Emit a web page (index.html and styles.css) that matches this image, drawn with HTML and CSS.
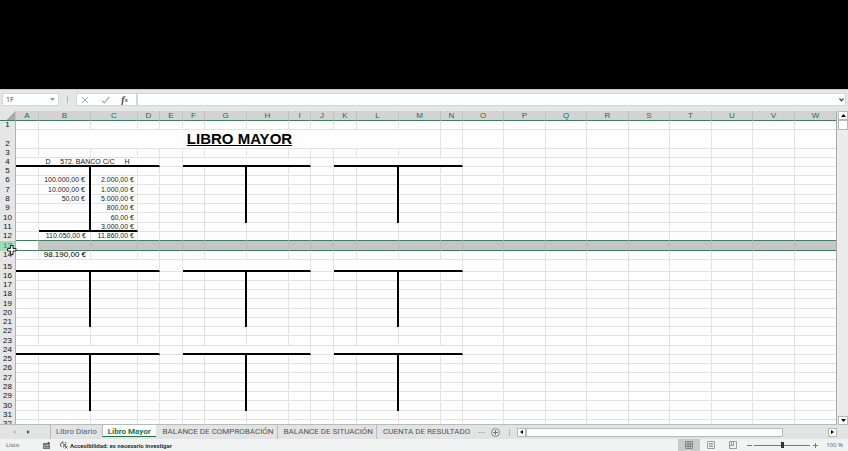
FILE: index.html
```html
<!DOCTYPE html>
<html lang="es">
<head>
<meta charset="utf-8">
<title>Libro Mayor</title>
<link rel="stylesheet" href="styles.css">
</head>
<body>
<div class="backdrop"></div>
<header class="formula-bar">
  <div class="name-box">
    <input type="text" value="1F" aria-label="Cuadro de nombres">
    <svg width="5" height="3" viewBox="0 0 5 3"><path d="M0 0h5L2.500 3z" fill="#999"/></svg>
  </div>
  <span class="grip"></span>
  <div class="formula-tools">
    <button type="button" aria-label="Cancelar"><svg width="8" height="8" viewBox="0 0 8 8"><path d="M1 1l6 6M7 1L1 7" stroke="#a9a9a9" fill="none"/></svg></button>
    <button type="button" aria-label="Introducir"><svg width="9" height="8" viewBox="0 0 9 8"><path d="M1 4.500l2.300 2.300L8.300 1" stroke="#a9a9a9" stroke-width="1.200" fill="none"/></svg></button>
    <button type="button" class="fx" aria-label="Insertar función">f<small>x</small></button>
  </div>
  <div class="formula-field">
    <input type="text" aria-label="Barra de fórmulas">
    <svg width="5" height="4" viewBox="0 0 5 4"><path d="M.5.500l2 2.300 2-2.300" stroke="#444" stroke-width="1.200" fill="none"/></svg>
  </div>
</header>
<main class="workspace">
  <div class="sheet">
    <table id="grid"></table>
    <svg class="cursor" width="10" height="12" viewBox="0 0 10 12"><path d="M3.500 1.500h2.500v3h3v2.500h-3v3.500h-2.500V7h-3V4.500h3z" fill="#fff" stroke="#222"/></svg>
  </div>
  <div class="vscroll">
    <button type="button" aria-label="Subir"><svg width="5" height="3" viewBox="0 0 5 3"><path d="M0 3h5L2.500 0z"/></svg></button>
    <div class="vthumb"></div>
    <button type="button" class="down" aria-label="Bajar"><svg width="5" height="3" viewBox="0 0 5 3"><path d="M0 0h5L2.500 3z"/></svg></button>
  </div>
</main>
<nav class="tabs">
  <div class="tab-nav">
    <button type="button" aria-label="Hoja anterior"><svg width="3" height="4" viewBox="0 0 3 4"><path d="M3 0v4L0 2z" fill="#bbb"/></svg></button>
    <button type="button" aria-label="Hoja siguiente"><svg width="3" height="4" viewBox="0 0 3 4"><path d="M0 0v4l3-2z" fill="#217346"/></svg></button>
  </div>
  <a href="#" class="tab diario">Libro Diario</a>
  <a href="#" class="tab active">Libro Mayor</a>
  <a href="#" class="tab">BALANCE DE COMPROBACIÓN</a>
  <a href="#" class="tab">BALANCE DE SITUACIÓN</a>
  <a href="#" class="tab">CUENTA DE RESULTADO</a>
  <span class="more">...</span>
  <button type="button" class="add" aria-label="Hoja nueva"><svg width="9" height="9" viewBox="0 0 9 9"><circle cx="4.500" cy="4.500" r="4" fill="none" stroke="#777" stroke-width=".8"/><path d="M4.500 2v5M2 4.500h5" stroke="#777"/></svg></button>
  <span class="grip"></span>
  <div class="hscroll">
    <button type="button" aria-label="Izquierda"><svg width="3" height="4" viewBox="0 0 3 4"><path d="M3 0v4L0 2z"/></svg></button>
    <div class="htrack"><div class="hthumb"></div></div>
    <button type="button" aria-label="Derecha"><svg width="3" height="4" viewBox="0 0 3 4"><path d="M0 0v4l3-2z"/></svg></button>
  </div>
</nav>
<footer class="status">
  <span class="ready">Listo</span>
  <svg class="macro" width="7" height="7" viewBox="0 0 7 7"><path d="M0 1h4v1.500h3V7H0z" fill="#777"/><circle cx="5.500" cy="1.300" r="1.200" fill="#444"/><path d="M1 3.500h5M1 5.300h5" stroke="#eee" stroke-width=".6" stroke-dasharray="1 .6"/></svg>
  <svg class="access" width="8" height="8" viewBox="0 0 8 8"><path d="M3.500.800A3 3 0 0 0 1.500 6M5 1l.5 1M2.500 2.500l2 1 2-.5M4.300 3.500L3.500 6.500M4.500 4l1 1M5 5l2.500 2.500M7.500 5L5 7.500" fill="none" stroke="#444" stroke-width=".9"/></svg>
  <strong>Accesibilidad: es necesario investigar</strong>
  <div class="views">
    <button type="button" class="on" aria-label="Normal"><svg width="8" height="8" viewBox="0 0 8 8"><path d="M.5.500h7v7h-7zM.5 3h7M.5 5.200h7M3 .5v7M5.200.500v7" fill="none" stroke="#777" stroke-width=".8"/></svg></button>
    <button type="button" aria-label="Diseño de página"><svg width="8" height="8" viewBox="0 0 8 8"><path d="M.5.500h7v7h-7zM2 2.500h4M2 4h4M2 5.500h4" fill="none" stroke="#888" stroke-width=".8"/></svg></button>
    <button type="button" aria-label="Salto de página"><svg width="8" height="8" viewBox="0 0 8 8"><path d="M.5.500h7v7h-7zM.5 4.500h4v-4M2.500.500v4" fill="none" stroke="#888" stroke-width=".8"/></svg></button>
  </div>
  <button type="button" class="step" aria-label="Alejar"><svg width="5" height="5" viewBox="0 0 5 5"><path d="M0 2.500h5" stroke="#777"/></svg></button>
  <input type="range" min="0" max="100" value="50" aria-label="Zoom">
  <button type="button" class="step" aria-label="Acercar"><svg width="5" height="5" viewBox="0 0 5 5"><path d="M0 2.500h5M2.500 0v5" stroke="#777"/></svg></button>
  <span class="percent">100 %</span>
</footer>
<script src="grid.js"></script>
</body>
</html>
```
FILE: grid.js
```js
const widths = [23, 52, 47, 22, 23, 22, 42, 42, 22, 23, 23, 42, 42, 22, 41, 42, 41, 42, 41, 42, 41, 42, 42];
const heights = [9, 19, 9, 9, 9, 9, 10, 9, 9, 10, 9, 9, 10, 9, 12, 9, 9, 9, 10, 9, 9, 9, 10, 9, 9, 9, 10, 9, 9, 10, 9, 9];
const letters = "ABCDEFGHIJKLMNOPQRSTUVW";

const values = {
  B2: "LIBRO MAYOR",
  A4: "D     572. BANCO C/C     H",
  B6: "100.000,00 €", C6: "2.000,00 €",
  B7: "10.000,00 €", C7: "1.000,00 €",
  B8: "50,00 €", C8: "5.000,00 €",
  C9: "800,00 €",
  C10: "60,00 €",
  C11: "3.000,00 €",
  B12: "110.050,00 €", C12: "11.860,00 €",
  B14: "98.190,00 €"
};

// Merged ranges: first cell -> number of columns it spans.
const merged = { B2: 12 };
const titleRows = [4, 15, 24];
for (const row of titleRows) {
  for (const col of "AFK") merged[col + row] = 4;
}

// The upright of each T account.
function hasStem(col, row) {
  if (!"BGL".includes(col)) return false;
  const lastOfFirst = col === "B" ? 11 : 10;
  return (row >= 5 && row <= lastOfFirst) || (row >= 16 && row <= 21) || (row >= 25 && row <= 30);
}

const table = document.getElementById("grid");

const cols = document.createElement("colgroup");
for (const w of [16, ...widths]) {
  const col = document.createElement("col");
  col.style.width = w + "px";
  cols.append(col);
}
table.append(cols);

const headRow = table.createTHead().insertRow();
const corner = document.createElement("td");
corner.className = "corner";
headRow.append(corner);
for (const letter of letters) {
  const th = document.createElement("th");
  th.scope = "col";
  th.textContent = letter;
  headRow.append(th);
}

const body = table.createTBody();
heights.forEach((h, i) => {
  const n = i + 1;
  const row = body.insertRow();
  row.style.height = h + "px";
  if (n === 12) row.className = "above-selected";
  if (n === 13) row.className = "selected";
  const th = document.createElement("th");
  th.scope = "row";
  th.textContent = n;
  row.append(th);
  for (let c = 0; c < letters.length; c++) {
    const ref = letters[c] + n;
    const cell = row.insertCell();
    if (values[ref]) cell.textContent = values[ref];
    if (ref === "B2") cell.classList.add("title");
    if (ref === "B14") cell.classList.add("balance");
    if (hasStem(letters[c], n)) cell.classList.add("stem");
    if (ref === "B11" || ref === "C11") cell.classList.add("rule");
    if (merged[ref]) {
      cell.colSpan = merged[ref];
      if (titleRows.includes(n)) cell.classList.add("account", "rule");
      c += merged[ref] - 1;
    }
  }
});
```
FILE: styles.css
```css
* { box-sizing: border-box; }

body {
  margin: 0;
  height: 100vh;
  display: flex;
  flex-direction: column;
  overflow: hidden;
  background: #e5e6e6;
  font-family: "Liberation Sans", Arial, sans-serif;
  font-size: 7px;
  color: #222;
}

button {
  display: flex;
  align-items: center;
  justify-content: center;
  margin: 0;
  padding: 0;
  border: 0;
  background: none;
  font: inherit;
}

svg { display: block; flex: none; }

input { min-width: 0; padding: 0; border: 0; background: none; outline: 0; }

.backdrop { flex: none; height: 89px; background: #000; }

.formula-bar {
  flex: none;
  display: flex;
  height: 22px;
  padding: 3px 2px 5px;
  border-top: 1px solid #ccc;
}

.name-box, .formula-tools, .formula-field {
  display: flex;
  align-items: center;
  background: #fff;
  border: 1px solid #d6d6d6;
}

.name-box { width: 57px; padding: 0 3px; }
.name-box input { flex: 1; font: 7px "Open Sans", sans-serif; color: #444; }

.grip { align-self: center; width: 1px; height: 7px; background: #b5b5b5; }
.formula-bar .grip { margin: 0 8px; }

.formula-tools { width: 61px; justify-content: space-between; padding: 0 8px 0 4px; }
.fx { font: italic bold 10px "Liberation Serif", serif; color: #444; }
.fx small { font-size: 7px; }

.formula-field { flex: 1; padding: 0 1px; }
.formula-field input { flex: 1; }

.workspace { flex: 1; min-height: 0; display: flex; }

.sheet {
  position: relative;
  flex: 1;
  min-width: 0;
  overflow: hidden;
  background: #fefefe;
  border-right: 1px solid #a5aaa8;
  border-bottom: 1px solid #b8bcba;
}

table { table-layout: fixed; width: 821px; border-spacing: 0; }

th, td { padding: 0; line-height: 8px; white-space: pre; vertical-align: bottom; }

thead th, .corner {
  height: 10px;
  background: #d2d3d2;
  border-right: 1px solid #bfc2c0;
  border-bottom: 1px solid #3f7d60;
  font-size: 8px;
  font-weight: 400;
  color: #2b6a4b;
}

.corner { background: linear-gradient(135deg, #e3e4e4 65%, #aaa 65%); }

tbody th {
  padding-bottom: 1px;
  background: #e5e6e6;
  border-right: 1px solid #aeb2b0;
  font-size: 8px;
  font-weight: 400;
  color: #111;
}

tbody td {
  padding-right: 3px;
  border-right: 1px solid #e3e3e3;
  border-bottom: 1px solid #e3e3e3;
  text-align: right;
}

tbody td:nth-child(3) { padding-right: 4px; }

tbody td.title {
  padding: 0;
  line-height: 18px;
  font-size: 15px;
  font-weight: 700;
  text-align: center;
  text-decoration: underline;
  color: #000;
}

tbody td.account { padding: 0; line-height: 7px; text-align: center; }
tbody td.balance { font-size: 8px; color: #000; }
tbody td.rule { border-bottom: 2px solid #000; line-height: 7px; }

/* The row line is drawn inside the cell so that it does not cut the upright. */
tbody td.stem {
  padding-bottom: 1px;
  border-right: 2px solid #000;
  border-bottom: 0;
  box-shadow: inset 0 -1px #e3e3e3;
}
tbody td.stem.rule { box-shadow: inset 0 -2px #000; }

.above-selected td { border-bottom-color: #3f7d60; }
.selected th { background: #a2dbb9; color: #2f8f5b; }
.selected td { background: #c6c6c6; border-right-color: #bababa; border-bottom-color: #3f7d60; }
.selected td:nth-child(2) { background: #fff; }

.cursor { position: absolute; left: 7px; top: 133px; }

.vscroll { flex: none; display: flex; flex-direction: column; width: 11px; padding-left: 1px; background: #ececec; }
.vscroll button, .vthumb { flex: none; height: 9px; background: #fff; border: 1px solid #b9b9b9; }
.vthumb { height: 10px; }
.down { margin-top: auto; }

.tabs {
  flex: none;
  display: flex;
  height: 14px;
  background: #e2e4e3;
  font: 8px Roboto, sans-serif;
  color: #555;
}

.tab-nav { display: flex; gap: 11px; width: 50px; padding-left: 13px; }

.tab {
  padding: 0 3px 0 6px;
  border-left: 1px solid #b9bcba;
  line-height: 13px;
  white-space: nowrap;
  text-decoration: none;
  color: #555;
}

.diario { padding: 0 5px; color: #4f6385; }

.active {
  height: 12px;
  padding: 0 5px;
  background: #fff;
  border-bottom: 1px solid #217346;
  font-weight: 700;
  color: #217346;
}

.active + .tab { border-left-color: transparent; }
.more { margin: 0 7px 0 5px; line-height: 12px; }
.tabs > .grip { margin: 0 7px 0 9px; }

.hscroll { flex: 1; display: flex; align-items: center; margin-right: 11px; }
.hscroll button { width: 9px; height: 9px; background: #fff; border: 1px solid #b9b9b9; }
.htrack { flex: 1; }
.hthumb { width: 85%; height: 9px; background: #fff; border: 1px solid #b9b9b9; }

.status {
  flex: none;
  display: flex;
  align-items: center;
  height: 12px;
  padding: 0 5px 0 6px;
  background: #f1f3f2;
  font: 6px "Open Sans", sans-serif;
  color: #555;
}

.ready { width: 37px; }
.access { margin: 0 2px 0 10px; }
.status strong { font-family: Roboto, sans-serif; color: #333; white-space: nowrap; }
.views { display: flex; height: 12px; margin-left: auto; }
.views button { width: 22px; }
.views .on { background: #c9cbca; }
.step { margin-left: 3px; }

input[type="range"] {
  width: 56px;
  height: 8px;
  margin: 0 0 0 2px;
  appearance: none;
  background: linear-gradient(#777, #777) center / 100% 1px no-repeat;
}

input[type="range"]::-webkit-slider-thumb { appearance: none; width: 3px; height: 6px; background: #333; }

.percent { margin-left: 8px; white-space: nowrap; }
```
